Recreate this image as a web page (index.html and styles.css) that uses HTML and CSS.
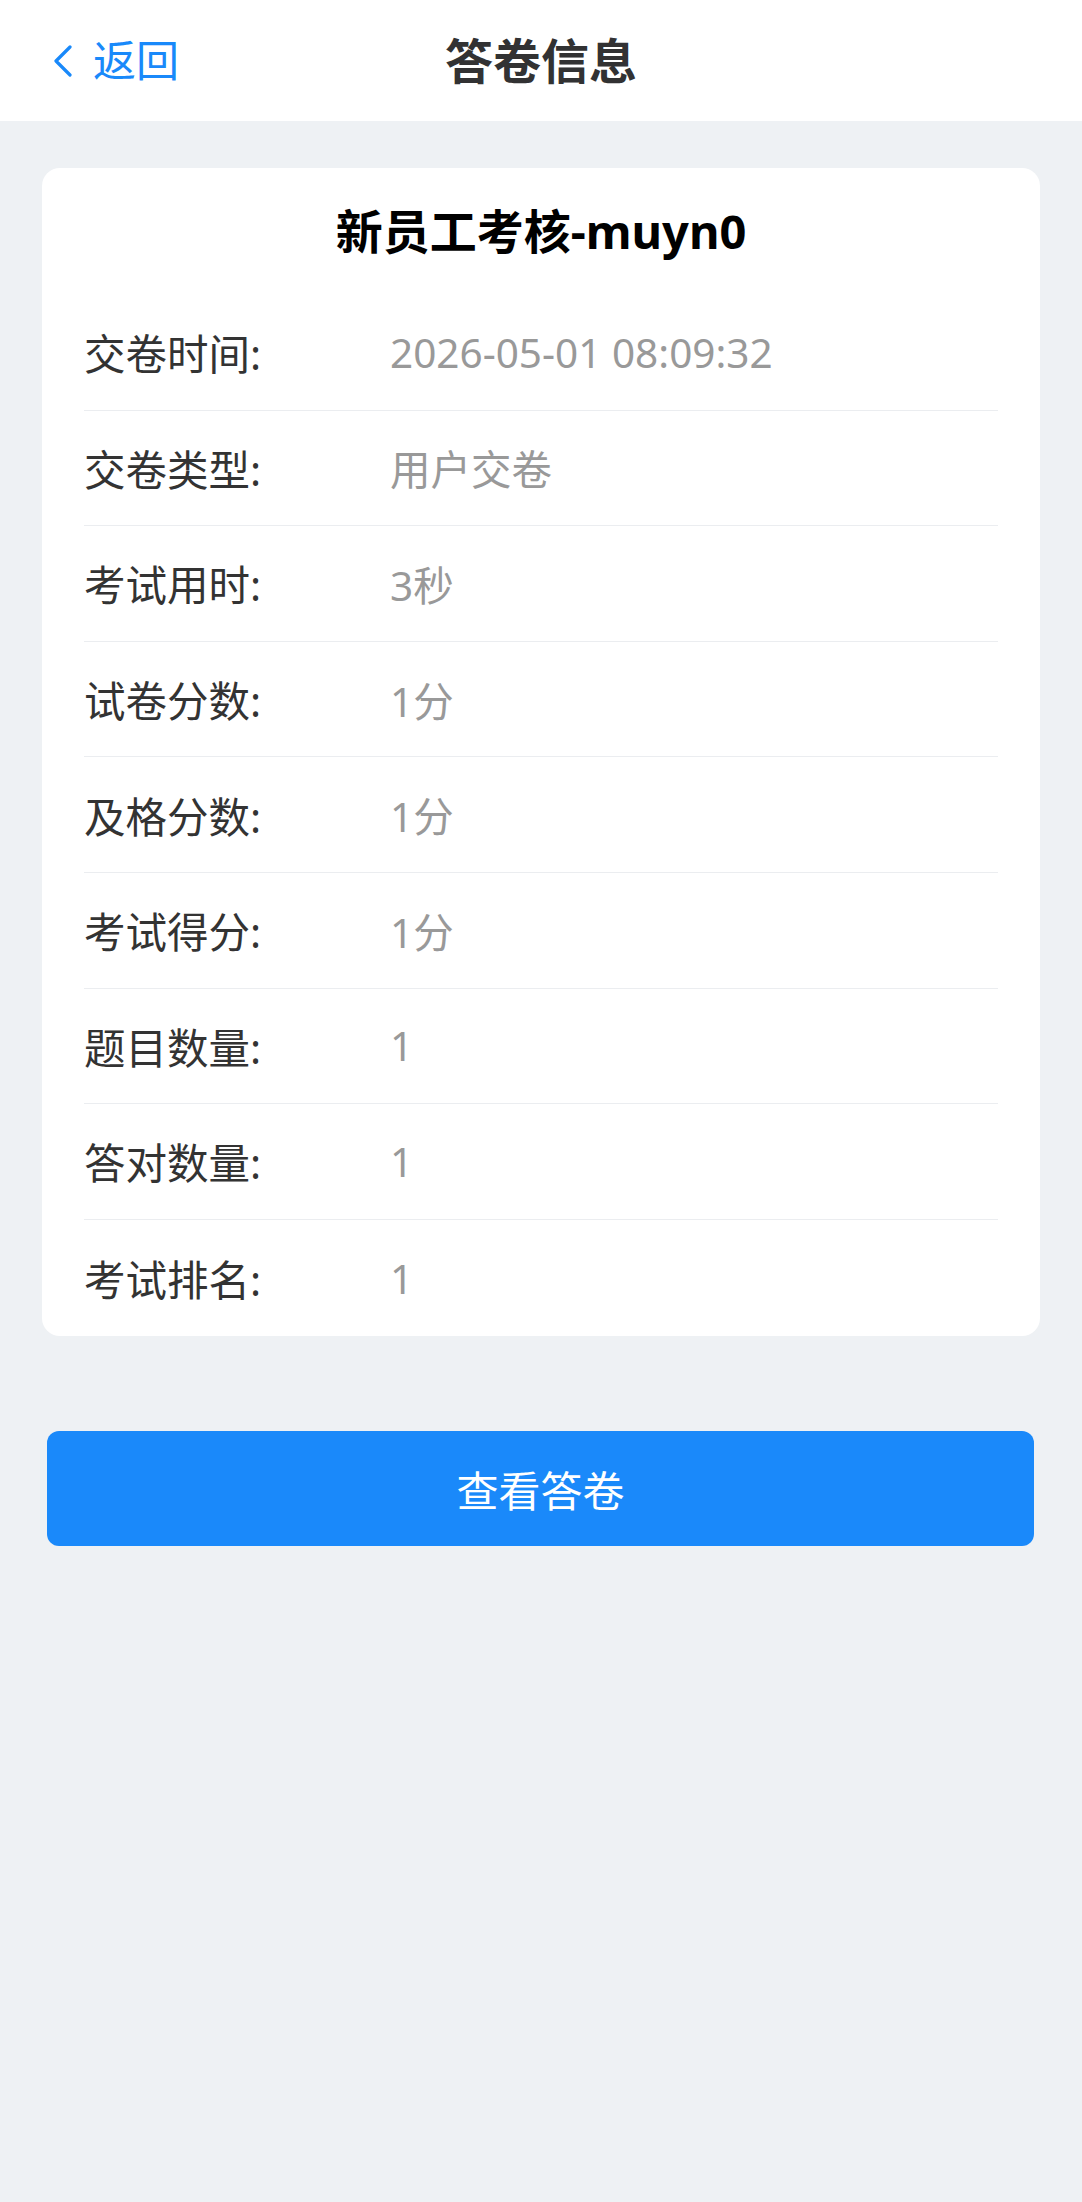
FILE: index.html
```html
<!DOCTYPE html>
<html lang="zh-CN">
<head>
<meta charset="utf-8">
<title>答卷信息</title>
<link rel="stylesheet" href="styles.css">
</head>
<body>
<header class="nav">
  <div class="nav-left">
    <svg class="nav-arrow" viewBox="0 0 20 32" width="20" height="32" aria-hidden="true">
      <path d="M17 2 L3 16 L17 30" fill="none" stroke="#1989fa" stroke-width="3.2" stroke-linecap="round" stroke-linejoin="round"/>
    </svg>
    <span class="nav-text">返回</span>
  </div>
  <h1 class="nav-title">答卷信息</h1>
</header>

<main class="content">
  <section class="card">
    <h2 class="card-title">新员工考核-muyn0</h2>
    <div class="row"><span class="label">交卷时间:</span><span class="value">2026-05-01 08:09:32</span></div>
    <div class="row"><span class="label">交卷类型:</span><span class="value">用户交卷</span></div>
    <div class="row"><span class="label">考试用时:</span><span class="value">3秒</span></div>
    <div class="row"><span class="label">试卷分数:</span><span class="value">1分</span></div>
    <div class="row"><span class="label">及格分数:</span><span class="value">1分</span></div>
    <div class="row"><span class="label">考试得分:</span><span class="value">1分</span></div>
    <div class="row"><span class="label">题目数量:</span><span class="value">1</span></div>
    <div class="row"><span class="label">答对数量:</span><span class="value">1</span></div>
    <div class="row"><span class="label">考试排名:</span><span class="value">1</span></div>
  </section>

  <div class="actions">
    <button class="btn-primary" type="button">查看答卷</button>
  </div>
</main>
</body>
</html>
```

FILE: styles.css
```css
* {
  box-sizing: border-box;
}

html, body {
  margin: 0;
  padding: 0;
}

body {
  background: #eef1f4;
  font-family: "Noto Sans", "Noto Sans CJK SC", sans-serif;
  color: #333333;
  min-height: 2202px;
}

.nav {
  position: relative;
  height: 121px;
  background: #ffffff;
  display: flex;
  align-items: center;
  justify-content: center;
}

.nav-left {
  position: absolute;
  left: 53px;
  top: 0;
  height: 121px;
  display: flex;
  align-items: center;
  gap: 20px;
}

.nav-arrow {
  display: block;
}

.nav-text {
  font-size: 43px;
  line-height: 1;
  color: #1989fa;
}

.nav-title {
  margin: 0;
  font-size: 48px;
  font-weight: 700;
  color: #323233;
  line-height: 1;
}

.content {
  padding: 47px 0 0;
}

.card {
  margin: 0 42px;
  background: #ffffff;
  border-radius: 18px;
  padding: 0 42px;
}

.card-title {
  margin: 0;
  height: 127px;
  line-height: 127px;
  text-align: center;
  font-size: 47px;
  font-weight: 700;
  color: #000000;
}

.row {
  display: grid;
  grid-template-columns: 306px 1fr;
  align-items: center;
  height: 115.6px;
  border-bottom: 1px solid #ebedf0;
}

.row:last-child {
  border-bottom: none;
  height: 116.5px;
}

.label {
  font-size: 41.5px;
  color: #333333;
}

.value {
  font-size: 40.5px;
  color: #999999;
}

.actions {
  padding: 95px 48px 0 47px;
}

.btn-primary {
  display: block;
  width: 100%;
  height: 115px;
  border: none;
  border-radius: 12px;
  background: #1a89fa;
  color: #ffffff;
  font-family: "Noto Sans", "Noto Sans CJK SC", sans-serif;
  font-size: 42px;
  cursor: pointer;
}
```
